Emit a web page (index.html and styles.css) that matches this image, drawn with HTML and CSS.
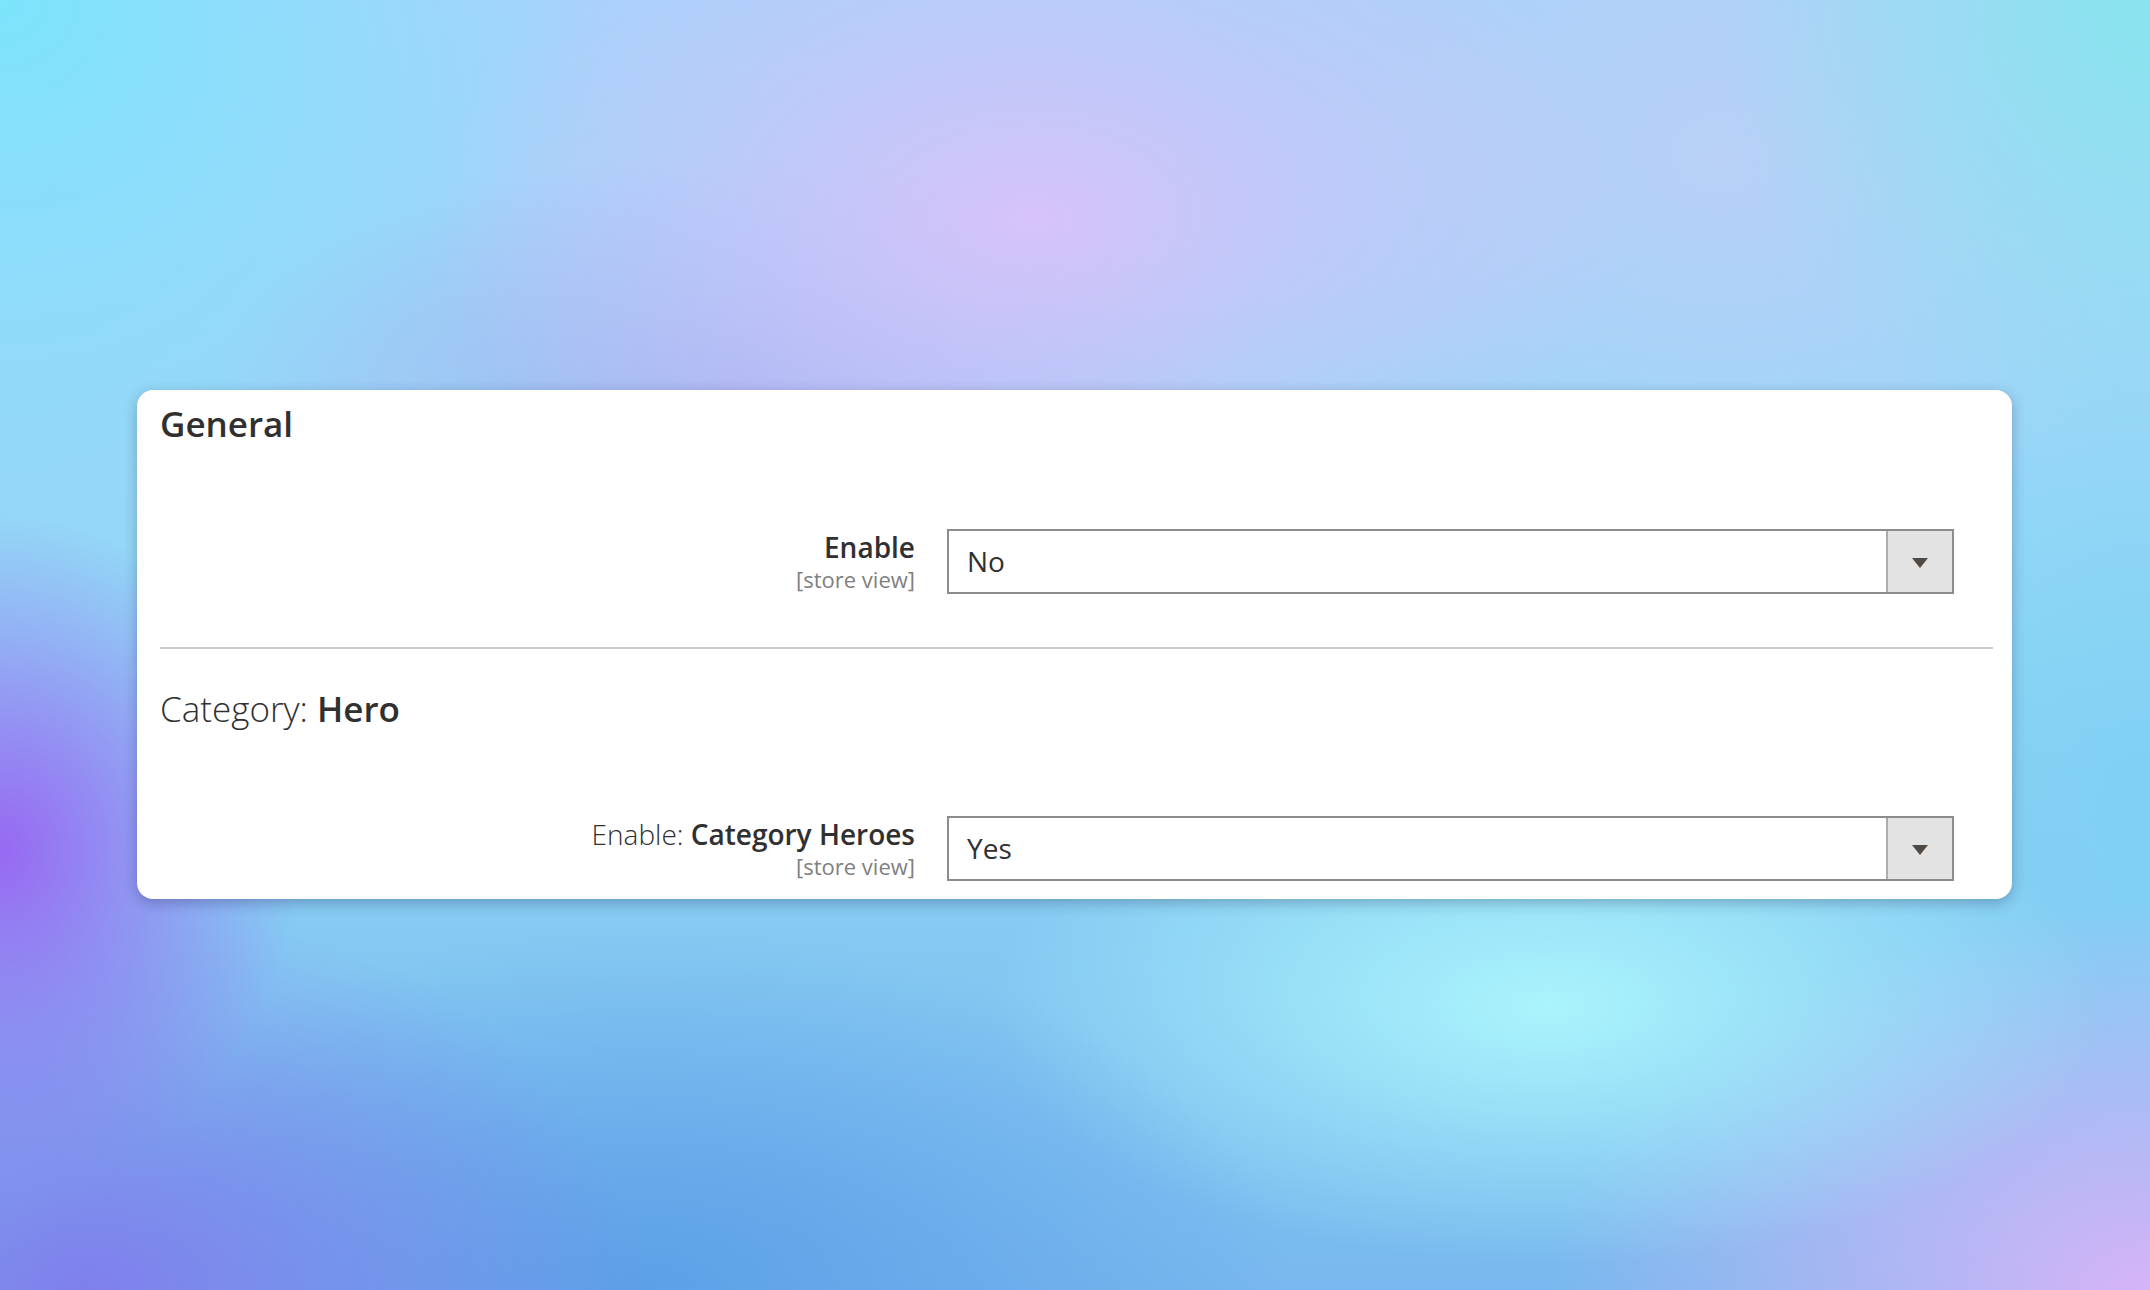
FILE: index.html
```html
<!DOCTYPE html>
<html lang="en">
<head>
<meta charset="utf-8">
<title>General</title>
<link rel="stylesheet" href="styles.css">
</head>
<body>
<main class="stage">
  <section class="card">
    <h2 class="title">General</h2>
    <div class="row row-first">
      <div class="label">
        <div class="label-main"><strong>Enable</strong></div>
        <div class="scope">[store view]</div>
      </div>
      <div class="select">
        <span class="select-value">No</span>
        <span class="select-arrow"><span class="tri"></span></span>
      </div>
    </div>
    <hr class="divider">
    <h2 class="title title-cat"><span class="light">Category:</span> <strong>Hero</strong></h2>
    <div class="row row-second">
      <div class="label">
        <div class="label-main"><span class="light">Enable:</span> <strong>Category Heroes</strong></div>
        <div class="scope">[store view]</div>
      </div>
      <div class="select">
        <span class="select-value">Yes</span>
        <span class="select-arrow"><span class="tri"></span></span>
      </div>
    </div>
  </section>
</main>
</body>
</html>
```
FILE: styles.css
```css
html, body {
  margin: 0;
  padding: 0;
}
body {
  width: 2150px;
  height: 1290px;
  overflow: hidden;
  font-family: "Open Sans", "Noto Sans", sans-serif;
  color: #303030;
  background-color: #8ed2f4;
  background-image:
    radial-gradient(ellipse 28% 28% at 48% 17%, rgba(214,194,250,1), rgba(214,194,250,0) 100%),
    radial-gradient(ellipse 24% 18% at 34% 30%, rgba(166,172,240,0.75), rgba(166,172,240,0) 100%),
    radial-gradient(ellipse 14% 26% at 0% 66%, rgba(152,104,242,1), rgba(152,104,242,0) 100%),
    radial-gradient(ellipse 26% 30% at 4% 100%, rgba(128,124,236,0.95), rgba(128,124,236,0) 100%),
    radial-gradient(ellipse 30% 28% at 30% 100%, rgba(92,160,232,1), rgba(92,160,232,0) 100%),
    radial-gradient(ellipse 26% 20% at 72% 78%, rgba(170,244,252,1), rgba(170,244,252,0) 100%),
    radial-gradient(ellipse 28% 30% at 100% 100%, rgba(214,180,248,1), rgba(214,180,248,0) 100%),
    radial-gradient(ellipse 28% 40% at 0% 0%, rgba(124,228,252,1), rgba(124,228,252,0) 100%),
    radial-gradient(ellipse 20% 36% at 100% 0%, rgba(136,228,238,1), rgba(136,228,238,0) 100%),
    radial-gradient(ellipse 24% 30% at 80% 12%, rgba(184,208,248,1), rgba(184,208,248,0) 100%),
    radial-gradient(ellipse 16% 30% at 100% 62%, rgba(128,208,244,1), rgba(128,208,244,0) 100%),
    linear-gradient(180deg, #a8d2fa 0%, #90d8f6 50%, #78b8ee 100%);
}
.stage {
  padding: 390px 0 0 137px;
}
.card {
  box-sizing: border-box;
  width: 1875px;
  height: 509px;
  background: #ffffff;
  border-radius: 16px;
  box-shadow: 0 4px 14px rgba(20, 20, 60, 0.28);
  padding: 12px 19px 0 23px;
}
.title {
  margin: 0;
  font-size: 35px;
  line-height: 44px;
  font-weight: 600;
  color: #303030;
}
.title-cat strong {
  font-weight: 600;
}
.light {
  font-weight: 300;
}
.row {
  display: grid;
  grid-template-columns: 755px 1007px;
  column-gap: 32px;
  align-items: start;
}
.row-first {
  margin-top: 83px;
}
.row-second {
  margin-top: 85px;
}
.label {
  text-align: right;
}
.label-main {
  font-size: 28px;
  line-height: 36px;
  color: #303030;
}
.label-main strong {
  font-weight: 600;
}
.scope {
  font-size: 22px;
  line-height: 28px;
  color: #808080;
}
.select {
  box-sizing: border-box;
  height: 65px;
  border: 2px solid #8c8c8c;
  display: flex;
  background: #ffffff;
}
.select-value {
  flex: 1;
  padding-left: 18px;
  font-size: 28px;
  line-height: 61px;
  color: #303030;
}
.select-arrow {
  width: 66px;
  box-sizing: border-box;
  border-left: 2px solid #adadad;
  background: #e3e3e3;
  display: flex;
  align-items: center;
  justify-content: center;
}
.tri {
  width: 0;
  height: 0;
  border-left: 8px solid transparent;
  border-right: 8px solid transparent;
  border-top: 10px solid #514943;
  margin-top: 2px;
}
.divider {
  margin: 53px 0 0 0;
  height: 2px;
  border: 0;
  background: #cccccc;
}
.title-cat {
  margin-top: 38px;
}
```
